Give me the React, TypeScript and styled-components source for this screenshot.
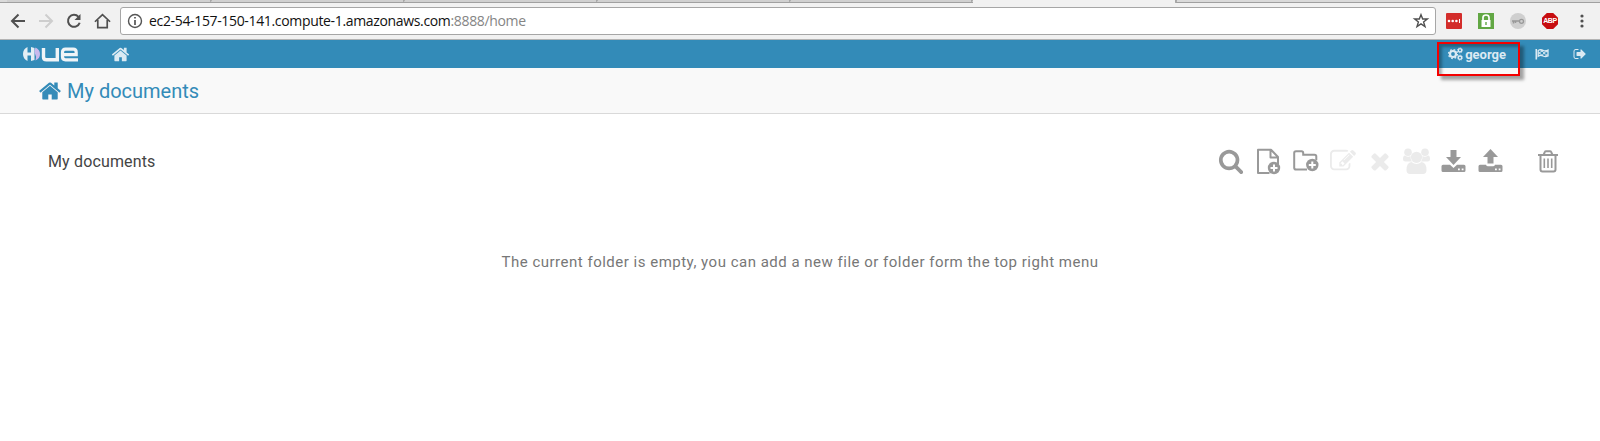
import React from 'react';
import styled, { createGlobalStyle } from 'styled-components';

const GlobalStyle = createGlobalStyle`
  * { box-sizing: border-box; }
  body { margin: 0; background: #fff; font-family: Roboto, "Liberation Sans", sans-serif; }
  svg { display: block; flex: none; overflow: visible; }
`;

const Page = styled.div`
  display: flex;
  flex-direction: column;
  height: 441px;
  overflow: hidden;
`;

const TabStrip = styled.div`
  display: flex;
  height: 3px;
  background: #dadada;
  padding-left: 7px;
  border-bottom: 1px solid #a0a0a0;
`;

const Tab = styled.div<{ $width: number; $active?: boolean }>`
  width: ${p => p.$width}px;
  height: ${p => (p.$active ? 3 : 2)}px;
  flex: none;
  background: ${p => (p.$active ? '#f1f1f1' : '#d0d0d0')};
  border-right: 2px solid #a6a6a6;
  border-radius: 0 0 2px 0;
`;

const BrowserBar = styled.div`
  display: flex;
  align-items: center;
  height: 37px;
  background: #f1f1f1;
  border-bottom: 1px solid #b4b4b4;
  padding: 0 10px 0 10px;
`;

const NavButtons = styled.div`
  display: flex;
  gap: 12px;
  width: 110px;
`;

const AddressBox = styled.div`
  display: flex;
  align-items: center;
  width: 1316px;
  height: 28px;
  border: 1px solid #a6a6a6;
  border-radius: 3px;
  background: #fff;
  padding: 0 6px 0 6px;
`;

const Url = styled.span`
  flex: 1;
  margin-left: 6px;
  font: 14px/20px "Open Sans", sans-serif;
  letter-spacing: -0.34px;
  color: #111;
  white-space: nowrap;
`;

const UrlTail = styled.span`
  color: #858585;
`;

const Extensions = styled.div`
  display: flex;
  align-items: center;
  gap: 16px;
  margin-left: 10px;
`;

const BlockBadge = styled.span`
  display: flex;
  align-items: center;
  justify-content: center;
  width: 16px;
  height: 16px;
  background: #c70d10;
  clip-path: polygon(30% 0, 70% 0, 100% 30%, 100% 70%, 70% 100%, 30% 100%, 0 70%, 0 30%);
  color: #fff;
  font: 700 7px/10px "Liberation Sans", sans-serif;
  letter-spacing: -0.4px;
`;

const AppBar = styled.nav`
  display: flex;
  align-items: center;
  justify-content: space-between;
  height: 28px;
  background: #338bb8;
  color: #dbeaf3;
  padding: 0 13px 0 22px;
`;

const BarGroup = styled.div`
  display: flex;
  align-items: center;
`;

const HomeLink = styled.a`
  margin-left: 32px;
`;

const UserLink = styled.a`
  position: relative;
  display: flex;
  align-items: center;
  gap: 2px;
  margin-right: 29px;
  font-size: 13px;
  font-weight: 700;
  line-height: 29px;
`;

const Callout = styled.span`
  position: absolute;
  left: -11px;
  top: 2px;
  width: 83px;
  height: 34px;
  border: 2px solid #f40000;
  box-shadow: 4px 4px 3px rgba(0, 0, 0, 0.35), inset 3px 3px 3px rgba(0, 0, 0, 0.3);
`;

const FlagLink = styled.a`
  margin-right: 24px;
`;

const TitleBar = styled.header`
  display: flex;
  align-items: center;
  height: 46px;
  background: #f9f9f9;
  border-bottom: 1px solid #d9d9d9;
  padding-left: 38px;
  gap: 5px;
  color: #338bb8;
`;

const Title = styled.h1`
  margin: 0;
  font-size: 20px;
  font-weight: 400;
  line-height: 28px;
`;

const DocsBar = styled.div`
  display: flex;
  align-items: center;
  justify-content: space-between;
  height: 96px;
  padding: 0 42px 0 48px;
`;

const FolderName = styled.span`
  font-size: 16px;
  line-height: 20px;
  letter-spacing: 0.15px;
  color: #444;
`;

const Actions = styled.div`
  display: flex;
  align-items: center;
  padding-bottom: 2px;
`;

const Action = styled.button<{ $disabled?: boolean; $apart?: boolean }>`
  display: flex;
  justify-content: center;
  width: ${p => (p.$apart ? 20 : 37.2)}px;
  margin-left: ${p => (p.$apart ? 28 : 0)}px;
  padding: 0;
  border: 0;
  background: none;
  color: ${p => (p.$disabled ? '#ebebeb' : '#999')};
`;

const EmptyMessage = styled.p`
  margin: 42px 0 0;
  text-align: center;
  font-size: 15px;
  line-height: 20px;
  letter-spacing: 0.5px;
  color: #777;
`;

const HOME = 'M1472 992v480q0 26-19 45t-45 19h-384v-384h-256v384h-384q-26 0-45-19t-19-45v-480q0-1 .5-3t.5-3l575-474 575 474q1 2 1 6zm223-69l-62 74q-8 9-21 11h-3q-13 0-21-7l-692-577-692 577q-12 8-24 7-13-2-21-11l-62-74q-8-10-7-23.5t11-21.5l719-599q32-26 76-26t76 26l244 204v-195q0-14 9-23t23-9h192q14 0 23 9t9 23v408l219 182q10 8 11 21.5t-7 23.5z';
const SEARCH = 'M1216 832q0-185-131.5-316.5t-316.5-131.5-316.5 131.5-131.5 316.5 131.5 316.5 316.5 131.5 316.5-131.5 131.5-316.5zm512 832q0 52-38 90t-90 38q-54 0-90-38l-343-342q-179 124-399 124-143 0-273.5-55.5t-225-150-150-225-55.5-273.5 55.5-273.5 150-225 225-150 273.5-55.5 273.5 55.5 225 150 150 225 55.5 273.5q0 220-124 399l343 343q37 37 37 90z';
const EDIT = 'M888 1184l116-116-152-152-116 116v56h96v96h56zm440-720q-16-16-33 1l-350 350q-17 17-1 33t33-1l350-350q17-17 1-33zm80 594v190q0 119-84.5 203.5t-203.5 84.5h-832q-119 0-203.5-84.5t-84.5-203.5v-832q0-119 84.5-203.5t203.5-84.5h832q63 0 117 25 15 7 18 23 3 17-9 29l-49 49q-14 14-32 8-23-6-45-6h-832q-66 0-113 47t-47 113v832q0 66 47 113t113 47h832q66 0 113-47t47-113v-126q0-13 9-22l64-64q15-15 35-7t20 29zm-96-738l288 288-672 672h-288v-288zm444 132l-92 92-288-288 92-92q28-28 68-28t68 28l152 152q28 28 28 68t-28 68z';
const TIMES = 'M1490 1322q0 40-28 68l-136 136q-28 28-68 28t-68-28l-294-294-294 294q-28 28-68 28t-68-28l-136-136q-28-28-28-68t28-68l294-294-294-294q-28-28-28-68t28-68l136-136q28-28 68-28t68 28l294 294 294-294q28-28 68-28t68 28l136 136q28 28 28 68t-28 68l-294 294 294 294q28 28 28 68z';
const SIGN_OUT = 'M704 1440q0 4 1 20t.5 26.5-3 23.5-10 19.5-20.5 6.5h-320q-119 0-203.5-84.5t-84.5-203.5v-704q0-119 84.5-203.5t203.5-84.5h320q13 0 22.5 9.5t9.5 22.5q0 4 1 20t.5 26.5-3 23.5-10 19.5-20.5 6.5h-320q-66 0-113 47t-47 113v704q0 66 47 113t113 47h312l11.5 1 11.5 3 8 5.5 7 9 2 13.5zm928-544q0 26-19 45l-544 544q-19 19-45 19t-45-19-19-45v-288h-448q-26 0-45-19t-19-45v-384q0-26 19-45t45-19h448v-288q0-26 19-45t45-19 45 19l544 544q19 19 19 45z';

const Glyph = ({ d, size }: { d: string; size: number }) => (
  <svg width={size} height={size} viewBox="0 0 1792 1792" fill="currentColor"><path d={d} /></svg>
);

const HueLogo = () => (
  <svg width="57" height="16" viewBox="0 0 57 16" fill="none">
    <path d="M5.500 1Q1 3 1 8T5.500 15V9.500H9V15L12.500 14V2L9 1V6.500H5.500Z" fill="#e4eef4" />
    <path d="M13.500 1.500Q18 3.500 18 8T13.500 14.500Q15 11 13.300 8.500T13.500 1.500Z" fill="#c9b9ec" />
    <path d="M21.500 2V11Q21.500 13.800 24.500 13.800H35.300V2" stroke="#f0f4f7" strokeWidth="3.400" />
    <path d="M56 13.800H43.500Q40.500 13.800 40.500 10.800V6.200Q40.500 3.200 43.500 3.200H51.200Q54.200 3.200 54.200 6.200V8.700H41" stroke="#f0f4f7" strokeWidth="3.200" />
  </svg>
);

const CogsIcon = () => (
  <svg width="15" height="14" viewBox="0 0 15 14" fill="none" stroke="currentColor">
    <circle cx="5" cy="7" r="3" strokeWidth="2.200" />
    <circle cx="5" cy="7" r="4.500" strokeWidth="1.300" strokeDasharray="1.700 1.834" />
    <circle cx="12" cy="3.300" r="1.700" strokeWidth="1.400" />
    <circle cx="12" cy="3.300" r="2.600" strokeWidth=".7" strokeDasharray="1.100 .94" />
    <circle cx="12" cy="10.700" r="1.700" strokeWidth="1.400" />
    <circle cx="12" cy="10.700" r="2.600" strokeWidth=".7" strokeDasharray="1.100 .94" />
  </svg>
);

const FlagIcon = () => (
  <svg width="14" height="12" viewBox="0 0 14 12" fill="none" stroke="currentColor">
    <path d="M1.300 1V11.500" strokeWidth="1.600" />
    <path d="M3.200 2.500Q5.500 1 8 2.300T13 2.100V8Q10.500 9.300 8 8T3.200 8.300Z" strokeWidth="1.300" />
    <path d="M5.500 2H8V4H5.500ZM3.500 4H5.700V6.200H3.500ZM8 4H10.300V6.200H8ZM5.500 6.200H8V8H5.500ZM10.300 2.200H12.700V4.200H10.300ZM10.300 6.200H12.700V8H10.300Z" fill="currentColor" stroke="none" opacity=".85" />
  </svg>
);

const PlusBadge = ({ x, y }: { x: number; y: number }) => (
  <g transform={`translate(${x} ${y})`}>
    <circle r="6.200" fill="#999" />
    <path d="M0-3.500V3.500M-3.500 0H3.500" stroke="#fff" strokeWidth="2" />
  </g>
);

const NewFileIcon = () => (
  <svg width="24" height="26" viewBox="-.5 -.5 24 26" fill="none" stroke="#999" strokeWidth="2">
    <path d="M13 24.500H1.500V1.200H14.500L21.500 8.500V16M14 1.500V9H21.500" strokeLinejoin="round" />
    <g stroke="none"><PlusBadge x={17.500} y={19.500} /></g>
  </svg>
);

const NewFolderIcon = () => (
  <svg width="26" height="22" viewBox="-1 0 26 22" fill="none" stroke="#999" strokeWidth="2">
    <path d="M14 19.500H3Q1.200 19.500 1.200 17.700V3Q1.200 1.200 3 1.200H8.500Q10.200 1.200 10.200 3V4.700H21.500Q23.300 4.700 23.300 6.500V10" />
    <g stroke="none"><PlusBadge x={19.300} y={15} /></g>
  </svg>
);

const GroupIcon = () => (
  <svg width="28" height="26" viewBox="0.5 0 28 26" fill="currentColor">
    <circle cx="5.500" cy="4.300" r="3.800" />
    <circle cx="22.500" cy="4.300" r="3.800" />
    <path d="M2.500 7.500Q5.500 9.600 8 8Q7.700 11.500 9.500 13.500H3Q.5 13.500.5 11Q.5 7.500 2.500 7.500ZM25.500 7.500Q22.500 9.600 20 8Q20.300 11.500 18.500 13.500H25Q27.500 13.500 27.500 11Q27.500 7.500 25.500 7.500Z" />
    <circle cx="14" cy="9.300" r="5.600" />
    <path d="M9 14Q14 18 19 14Q24 14.500 24 22Q24 26 20.500 26H7.500Q4 26 4 22Q4 14.500 9 14Z" />
  </svg>
);

const DriveIcon = ({ up }: { up?: boolean }) => (
  <svg width="24" height="24" viewBox="0.5 0.5 24 24" fill="currentColor">
    <path d={up ? 'M9 15V8.500H4.500L12 .5L19.500 8.500H15V15Z' : 'M9 1.500H15V8.500H19.500L12 16.500L4.500 8.500H9Z'} />
    <path d={up
      ? 'M1.500 16.200H7.500Q8 17.700 9.500 17.700H14.500Q16 17.700 16.500 16.200H22.500Q24 16.200 24 17.700V22Q24 23.500 22.500 23.500H1.500Q0 23.500 0 22V17.700Q0 16.200 1.500 16.200Z'
      : 'M1.500 16.200H8.500L12 19.500L15.500 16.200H22.500Q24 16.200 24 17.700V22Q24 23.500 22.500 23.500H1.500Q0 23.500 0 22V17.700Q0 16.200 1.500 16.200Z'} />
    <path d="M16.500 20H18.300V21.700H16.500ZM20.200 20H22V21.700H20.200Z" fill="#fff" />
  </svg>
);

const TrashIcon = () => (
  <svg width="20" height="23" viewBox="0 0 20 23" fill="none" stroke="currentColor" strokeWidth="2">
    <path d="M0 5H20M5.500 5L7 1.700Q7.200 1.200 8 1.200H12Q12.800 1.200 13 1.700L14.500 5M2.500 5V19.500Q2.500 21.500 4.500 21.500H15.500Q17.500 21.500 17.500 19.500V5" />
    <path d="M6.300 8.500V18M10 8.500V18M13.700 8.500V18" strokeWidth="1.600" />
  </svg>
);

const BackForward = ({ forward }: { forward?: boolean }) => (
  <svg width="16" height="16" viewBox="0 0 16 16" fill="none" stroke={forward ? '#cecece' : '#505050'} strokeWidth="2">
    <path d={forward ? 'M1 8H14M7.500 1.500L14 8L7.500 14.500' : 'M15 8H2M8.500 1.500L2 8L8.500 14.500'} />
  </svg>
);

const ReloadIcon = () => (
  <svg width="16" height="16" viewBox="0 0 16 16" fill="none">
    <path d="M12.500 3.800A6 6 0 1 0 13.700 9.700" stroke="#505050" strokeWidth="2" />
    <path d="M14.500 1V7H8.500Z" fill="#505050" />
  </svg>
);

const BrowserHomeIcon = () => (
  <svg width="17" height="16" viewBox="0 0 18 16" fill="none" stroke="#505050" strokeWidth="1.800">
    <path d="M1 8.800L9 1.200L17 8.800M4 7V15H14V7" />
  </svg>
);

const InfoIcon = () => (
  <svg width="16" height="16" viewBox="0 0 16 16" fill="none" stroke="#555" strokeWidth="1.400">
    <circle cx="8" cy="8" r="6.500" />
    <path d="M8 7V12M8 4V5.600" strokeWidth="1.700" />
  </svg>
);

const StarIcon = () => (
  <svg width="16" height="16" viewBox="0 0 16 16" fill="none" stroke="#505050" strokeWidth="1.400">
    <path d="M8 1.700L9.700 6H14.300L10.600 8.900L12 13.600L8 10.900L4 13.600L5.400 8.900L1.700 6H6.300Z" />
  </svg>
);

const PasswordIcon = () => (
  <svg width="16" height="16" viewBox="0 0 16 16">
    <rect width="16" height="16" rx="1" fill="#d32d2b" />
    <g fill="#fff"><circle cx="3" cy="8" r="1.300" /><circle cx="6.700" cy="8" r="1.300" /><circle cx="10.400" cy="8" r="1.300" /><path d="M13 6H14V10H13Z" /></g>
  </svg>
);

const LockIcon = () => (
  <svg width="16" height="16" viewBox="0 0 16 16">
    <rect width="16" height="16" fill="#62a744" />
    <path d="M5 7V4.500Q5 2 8 2T11 4.500V7" fill="none" stroke="#fff" strokeWidth="1.700" />
    <path d="M3.500 7H12.500V14H3.500Z" fill="#fff" />
    <path d="M7.300 9H8.700V12H7.300Z" fill="#62a744" />
  </svg>
);

const KeyIcon = () => (
  <svg width="16" height="16" viewBox="0 0 16 16">
    <circle cx="8" cy="8" r="8" fill="#cfcfcf" />
    <path d="M2 8H9M3.500 8V10.500M5.500 8V10" stroke="#999" strokeWidth="1.500" />
    <circle cx="11.500" cy="8.300" r="2" fill="none" stroke="#999" strokeWidth="1.300" />
  </svg>
);

const MenuIcon = () => (
  <svg width="16" height="16" viewBox="0 0 16 16" fill="#505050">
    <circle cx="8" cy="3" r="1.600" /><circle cx="8" cy="8" r="1.600" /><circle cx="8" cy="13" r="1.600" />
  </svg>
);

export default function App() {
  return (
    <Page>
      <GlobalStyle />
      <TabStrip>
        {[205, 193, 193, 193, 182].map((w, i) => <Tab key={i} $width={w} />)}
        <Tab $width={204} $active />
      </TabStrip>
      <BrowserBar>
        <NavButtons>
          <BackForward />
          <BackForward forward />
          <ReloadIcon />
          <BrowserHomeIcon />
        </NavButtons>
        <AddressBox>
          <InfoIcon />
          <Url>ec2-54-157-150-141.compute-1.amazonaws.com<UrlTail>:8888/home</UrlTail></Url>
          <StarIcon />
        </AddressBox>
        <Extensions>
          <PasswordIcon />
          <LockIcon />
          <KeyIcon />
          <BlockBadge>ABP</BlockBadge>
          <MenuIcon />
        </Extensions>
      </BrowserBar>
      <AppBar>
        <BarGroup>
          <HueLogo />
          <HomeLink><Glyph d={HOME} size={19} /></HomeLink>
        </BarGroup>
        <BarGroup>
          <UserLink><CogsIcon />george<Callout /></UserLink>
          <FlagLink><FlagIcon /></FlagLink>
          <Glyph d={SIGN_OUT} size={14} />
        </BarGroup>
      </AppBar>
      <TitleBar>
        <Glyph d={HOME} size={24} />
        <Title>My documents</Title>
      </TitleBar>
      <DocsBar>
        <FolderName>My documents</FolderName>
        <Actions>
          <Action><Glyph d={SEARCH} size={26} /></Action>
          <Action><NewFileIcon /></Action>
          <Action><NewFolderIcon /></Action>
          <Action $disabled><Glyph d={EDIT} size={26} /></Action>
          <Action $disabled><Glyph d={TIMES} size={26} /></Action>
          <Action $disabled><GroupIcon /></Action>
          <Action><DriveIcon /></Action>
          <Action><DriveIcon up /></Action>
          <Action $apart><TrashIcon /></Action>
        </Actions>
      </DocsBar>
      <EmptyMessage>The current folder is empty, you can add a new file or folder form the top right menu</EmptyMessage>
    </Page>
  );
}
